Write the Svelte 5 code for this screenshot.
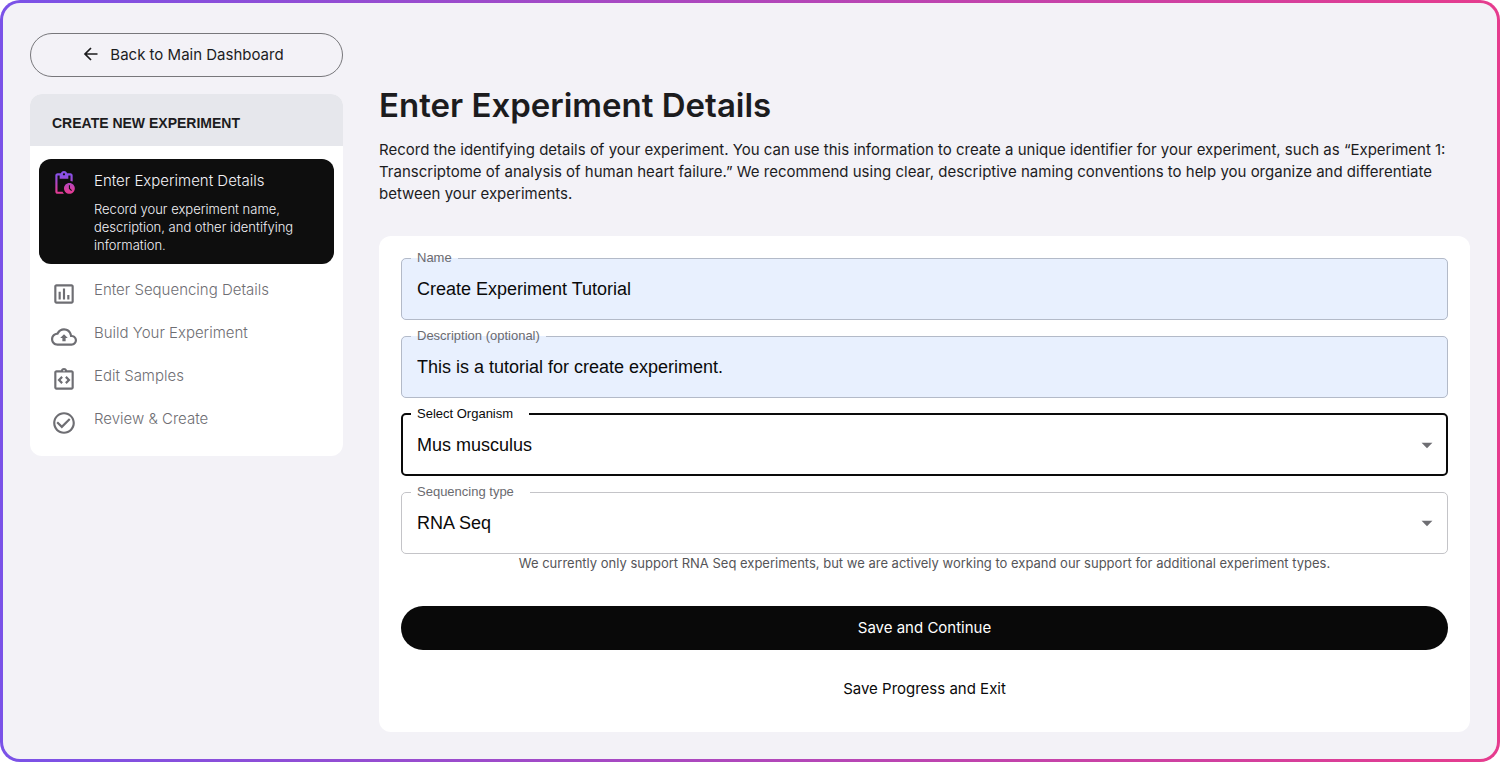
<script lang="ts">
	interface Step {
		title: string;
		description?: string;
		icon: string;
	}

	const steps: Step[] = [
		{
			title: 'Enter Experiment Details',
			description: 'Record your experiment name, description, and other identifying information.',
			icon: 'M17 12c-2.76 0-5 2.24-5 5s2.24 5 5 5 5-2.24 5-5-2.24-5-5-5zm1.65 7.35L16.5 17.2V14h1v2.79l1.85 1.85-.7.71zM18 3h-3.18C14.4 1.84 13.3 1 12 1s-2.4.84-2.82 2H6c-1.1 0-2 .9-2 2v15c0 1.1.9 2 2 2h6.11c-.59-.57-1.07-1.25-1.42-2H6V5h2v3h8V5h2v5.08c.71.1 1.38.31 2 .6V5c0-1.1-.9-2-2-2zm-6 2c-.55 0-1-.45-1-1s.45-1 1-1 1 .45 1 1-.45 1-1 1z'
		},
		{
			title: 'Enter Sequencing Details',
			icon: 'M19 3H5c-1.1 0-2 .9-2 2v14c0 1.1.9 2 2 2h14c1.1 0 2-.9 2-2V5c0-1.1-.9-2-2-2zm0 16H5V5h14v14zM7 10h2v7H7zm4-3h2v10h-2zm4 6h2v4h-2z'
		},
		{
			title: 'Build Your Experiment',
			icon: 'M19.35 10.04C18.67 6.59 15.64 4 12 4 9.11 4 6.6 5.64 5.35 8.04 2.34 8.36 0 10.91 0 14c0 3.31 2.69 6 6 6h13c2.76 0 5-2.24 5-5 0-2.64-2.05-4.78-4.65-4.96zM19 18H6c-2.21 0-4-1.79-4-4 0-2.05 1.53-3.76 3.56-3.97l1.07-.11.5-.95C8.08 7.14 9.94 6 12 6c2.62 0 4.88 1.86 5.39 4.43l.3 1.5 1.53.11c1.56.1 2.78 1.41 2.78 2.96 0 1.65-1.35 3-3 3zM8.5 13h2v3h3v-3h2L12 9.5z'
		},
		{
			title: 'Edit Samples',
			icon: 'M19 3h-4.18C14.4 1.84 13.3 1 12 1s-2.4.84-2.82 2H5c-1.1 0-2 .9-2 2v14c0 1.1.9 2 2 2h14c1.1 0 2-.9 2-2V5c0-1.1-.9-2-2-2zm-7-.25c.41 0 .75.34.75.75s-.34.75-.75.75-.75-.34-.75-.75.34-.75.75-.75zM19 19H5V5h14v14zM11 14.17L8.83 12 11 9.83 9.59 8.41 6 12l3.59 3.59zM14.41 15.59L18 12l-3.59-3.59L13 9.83 15.17 12 13 14.17z'
		},
		{
			title: 'Review & Create',
			icon: 'M16.59 7.58L10 14.17l-3.59-3.58L5 12l5 5 8-8-1.41-1.42zM12 2C6.48 2 2 6.48 2 12s4.48 10 10 10 10-4.48 10-10S17.52 2 12 2zm0 18c-4.42 0-8-3.58-8-8s3.58-8 8-8 8 3.58 8 8-3.58 8-8 8z'
		}
	];

	let current = 0;

	let name = 'Create Experiment Tutorial';
	let description = 'This is a tutorial for create experiment.';
	let organism = 'Mus musculus';
	let sequencing = 'RNA Seq';
</script>

{#snippet caret()}
	<svg class="caret" viewBox="0 0 24 24" aria-hidden="true">
		<path d="M7 10l5 5 5-5z" />
	</svg>
{/snippet}

<div class="frame">
	<aside>
		<button class="back" type="button">
			<svg viewBox="0 0 16 16" aria-hidden="true">
				<path d="M14.5 8H2M8 2L2 8l6 6" />
			</svg>
			Back to Main Dashboard
		</button>

		<nav class="panel">
			<h2>CREATE NEW EXPERIMENT</h2>
			<ol>
				{#each steps as step, index}
					<li class:active={index === current}>
						<svg class="icon" viewBox="0 0 24 24" aria-hidden="true">
							<defs>
								<linearGradient id="hot" x1="0" y1="0" x2="0" y2="1">
									<stop offset="0.2" stop-color="#8a50e6" />
									<stop offset="0.9" stop-color="#e03c96" />
								</linearGradient>
							</defs>
							<path d={step.icon} />
						</svg>
						<div>
							<h3>{step.title}</h3>
							{#if step.description}
								<p>{step.description}</p>
							{/if}
						</div>
					</li>
				{/each}
			</ol>
		</nav>
	</aside>

	<main>
		<h1>Enter Experiment Details</h1>
		<p class="intro">
			Record the identifying details of your experiment. You can use this information to create a
			unique identifier for your experiment, such as “Experiment 1: Transcriptome of analysis of
			human heart failure.” We recommend using clear, descriptive naming conventions to help you
			organize and differentiate between your experiments.
		</p>

		<form>
			<fieldset class="filled">
				<legend><label for="name">Name</label></legend>
				<input id="name" type="text" bind:value={name} />
			</fieldset>
			<fieldset class="filled">
				<legend><label for="description">Description (optional)</label></legend>
				<input id="description" type="text" bind:value={description} />
			</fieldset>
			<fieldset class="focused">
				<legend><label for="organism">Select Organism</label></legend>
				<div class="select">
					<select id="organism" bind:value={organism}>
						<option>Mus musculus</option>
					</select>
					{@render caret()}
				</div>
			</fieldset>
			<fieldset class="choice">
				<legend><label for="sequencing">Sequencing type</label></legend>
				<div class="select">
					<select id="sequencing" bind:value={sequencing}>
						<option>RNA Seq</option>
					</select>
					{@render caret()}
				</div>
			</fieldset>
			<p class="hint">
				We currently only support RNA Seq experiments, but we are actively working to expand our
				support for additional experiment types.
			</p>

			<button class="primary" type="button">Save and Continue</button>
			<button class="plain" type="button">Save Progress and Exit</button>
		</form>
	</main>
</div>

<style>
	:global(body) {
		background: #fff;
	}

	.frame {
		box-sizing: border-box;
		min-height: 100vh;
		display: grid;
		grid-template-columns: 313px 1fr;
		gap: 36px;
		padding: 30px 27px 26px;
		border: 3px solid transparent;
		border-radius: 20px;
		background:
			linear-gradient(#f3f2f7, #f3f2f7) padding-box,
			linear-gradient(90deg, #7a52e8, #e63c8e) border-box;
		font-family: Inter, 'Liberation Sans', sans-serif;
		color: #1c1c1e;
	}

	h1,
	h2,
	h3,
	p,
	ol {
		margin: 0;
		padding: 0;
	}

	button {
		font-family: inherit;
		font-size: 15px;
		cursor: pointer;
	}

	.back {
		width: 100%;
		height: 44px;
		display: flex;
		align-items: center;
		justify-content: center;
		gap: 11px;
		padding: 0 12px 2px 6px;
		border: 1px solid #77777b;
		border-radius: 22px;
		background: none;
		color: #1c1c1e;
	}
	.back svg {
		width: 16px;
		height: 16px;
		fill: none;
		stroke: #1c1c1e;
		stroke-width: 1.7;
	}

	.panel {
		margin-top: 17px;
		border-radius: 12px;
		background: #fff;
		overflow: hidden;
	}
	.panel h2 {
		padding: 19px 22px 13px;
		background: #e6e7ec;
		font-size: 14px;
		line-height: 20px;
		font-weight: 700;
		font-family: 'Liberation Sans', sans-serif;
	}

	ol {
		list-style: none;
		padding: 13px 9px 5px;
	}
	li {
		display: flex;
		gap: 17px;
		padding: 0 12px 17px;
		color: #6e6e73;
	}
	li.active {
		margin-bottom: 15px;
		padding: 11px 12px 10px;
		border-radius: 12px;
		background: #0e0e0e;
		color: #f3f2f7;
	}
	.icon {
		flex: none;
		width: 26px;
		height: 26px;
		margin: 2px 0 -2px;
		fill: #6e6e73;
	}
	.active .icon {
		margin: 0;
		fill: url(#hot);
	}
	h3 {
		font-size: 15px;
		line-height: 22px;
		font-weight: 300;
	}
	li p {
		margin-top: 8px;
		font-size: 13px;
		line-height: 18px;
		font-weight: 300;
	}

	h1 {
		margin-top: 50px;
		font-size: 33px;
		line-height: 44px;
		font-weight: 600;
	}
	.intro {
		margin-top: 12px;
		font-size: 15px;
		line-height: 22px;
	}

	form {
		margin-top: 31px;
		padding: 14px 22px 22px;
		border-radius: 12px;
		background: #fff;
		display: flex;
		flex-direction: column;
	}
	fieldset {
		min-width: 0;
		margin: 0 0 8px;
		padding: 0 0 7px;
		border: 1px solid #c4c4c8;
		border-radius: 5px;
		font-family: 'Liberation Sans', sans-serif;
	}
	.filled {
		border-color: #b3bac8;
		background: #e8f0fe;
	}
	.focused {
		padding-bottom: 6px;
		border: 2px solid #0a0a0a;
	}
	.choice {
		margin-bottom: 0;
	}
	legend {
		margin-left: 9px;
		padding: 0 6px;
		font-size: 13px;
		line-height: 16px;
		color: #6b6b70;
	}
	.focused legend,
	.choice legend {
		padding-right: 16px;
	}
	.focused legend {
		margin-left: 8px;
		color: #0a0a0a;
	}
	input,
	select {
		box-sizing: border-box;
		width: 100%;
		height: 46px;
		padding: 0 15px;
		border: 0;
		outline: 0;
		appearance: none;
		background: none;
		font-family: inherit;
		font-size: 18px;
		color: #0a0a0a;
	}
	.select {
		display: grid;
		align-items: center;
	}
	.select > :global(*) {
		grid-area: 1 / 1;
	}
	.focused select {
		padding: 0 14px;
	}
	.caret {
		justify-self: end;
		width: 26px;
		height: 26px;
		margin-right: 7px;
		fill: #6e6e73;
		pointer-events: none;
	}
	.focused .caret {
		margin-right: 6px;
	}
	.hint {
		font-size: 13px;
		line-height: 18px;
		text-align: center;
		color: #555558;
	}

	.primary {
		height: 44px;
		margin-top: 34px;
		padding-bottom: 2px;
		border: 0;
		border-radius: 22px;
		background: #090909;
		color: #fff;
	}
	.plain {
		height: 44px;
		margin-top: 16px;
		border: 0;
		background: none;
		color: #0a0a0a;
	}
</style>
